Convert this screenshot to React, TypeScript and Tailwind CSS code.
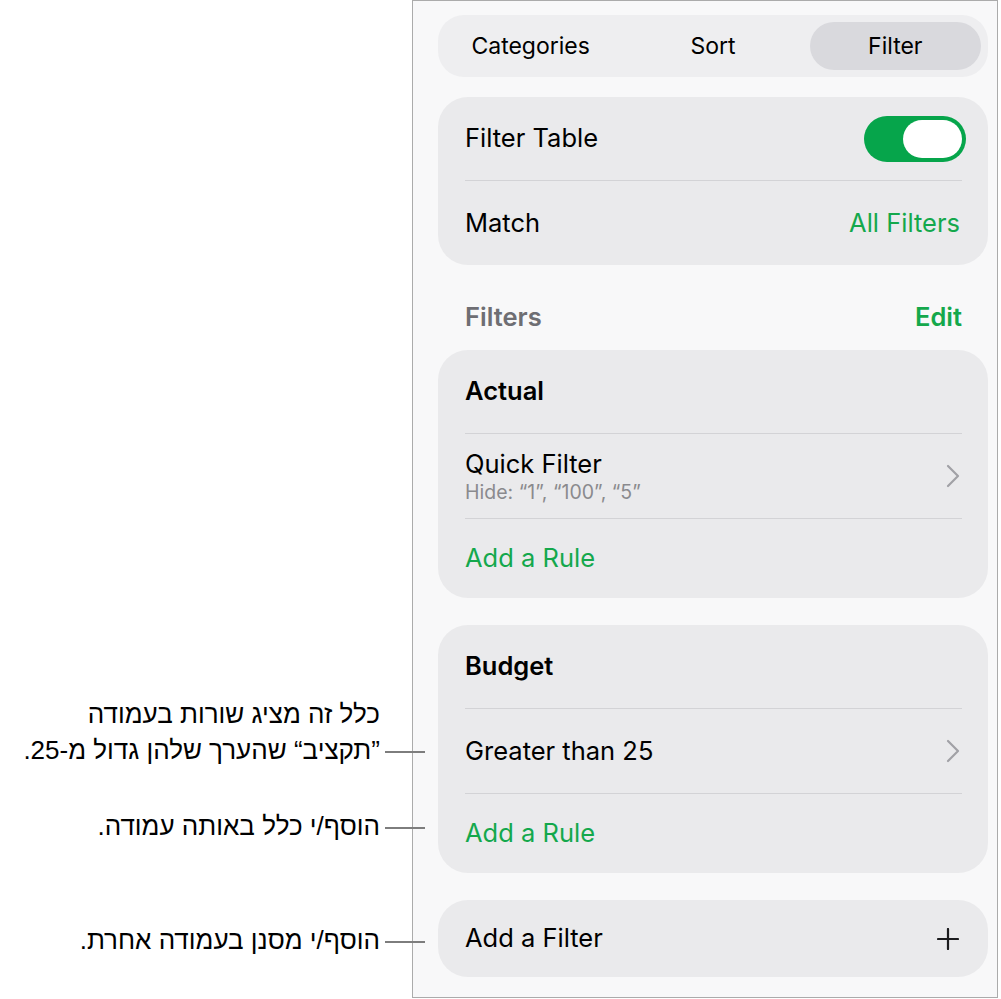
import React from "react";

const green = "text-[#14a84c]";

function Chevron() {
  return (
    <svg width="14" height="24" viewBox="0 0 14 24" fill="none" className="shrink-0">
      <path d="M2 2l10 10L2 22" stroke="#a1a1a6" strokeWidth="2.2" strokeLinecap="round" strokeLinejoin="round" />
    </svg>
  );
}

function Divider() {
  return <div className="h-px bg-[#d3d3d6] ml-[27px] mr-[26px]" />;
}

function Callout({ lines, mt }: { lines: string[]; mt: string }) {
  return (
    <div className={`flex items-end justify-end ${mt}`}>
      <div dir="rtl" className="text-right text-[26px] leading-[36px] text-black [font-family:'Liberation_Sans',Arial,sans-serif]">
        {lines.map((l) => (
          <div key={l}>{l}</div>
        ))}
      </div>
      <div className="h-[36px] pt-[3px] flex items-center ml-[5px] -mr-[13px] relative z-10">
        <div className="w-[40px] h-[2px] bg-[#7d7d7d]" />
      </div>
    </div>
  );
}

function FilterCard({ title, rule, hint }: { title: string; rule: string; hint?: string }) {
  return (
    <div className="bg-[#eaeaec] rounded-[30px]">
      <div className="h-[83px] flex items-center pl-[27px] text-[25.5px] font-semibold text-black">{title}</div>
      <Divider />
      <div className="h-[84px] flex items-center justify-between pl-[27px] pr-[28px]">
        <div className="flex flex-col">
          <span className="text-[25.5px] leading-[32px] text-black">{rule}</span>
          {hint && <span className="text-[19.5px] leading-[24px] text-[#8a8a8e]">{hint}</span>}
        </div>
        <Chevron />
      </div>
      <Divider />
      <div className={`h-[79px] flex items-center pl-[27px] text-[25.5px] ${green}`}>Add a Rule</div>
    </div>
  );
}

export default function App() {
  return (
    <div className="flex w-[1001px] h-[999px] bg-white [font-family:Inter,'Noto_Sans',sans-serif]">
      <div className="w-[412px] shrink-0 pt-[696px]">
        <Callout lines={["כלל זה מציג שורות בעמודה", "”תקציב“ שהערך שלהן גדול מ-25."]} mt="mt-0" />
        <Callout lines={["הוסף/י כלל באותה עמודה."]} mt="mt-[40px]" />
        <Callout lines={["הוסף/י מסנן בעמודה אחרת."]} mt="mt-[78px]" />
      </div>

      <div className="w-[586px] h-[998px] shrink-0 border border-[#ababab] bg-[#f8f8f9] pl-[25px] pr-[9px] pt-[14px] flex flex-col">
        {/* segmented control */}
        <div className="h-[62px] rounded-[26px] bg-[#eeeef0] p-[7px] grid grid-cols-3 gap-[11px] text-[23px] text-black">
          <div className="flex items-center justify-center">Categories</div>
          <div className="flex items-center justify-center">Sort</div>
          <div className="flex items-center justify-center rounded-full bg-[#d9d9dd]">Filter</div>
        </div>

        <div className="mt-[20px] bg-[#eaeaec] rounded-[30px]">
          <div className="h-[83px] flex items-center justify-between pl-[27px] pr-[22px]">
            <span className="text-[25.5px] text-black">Filter Table</span>
            <div className="w-[102px] h-[46px] rounded-full bg-[#06a54b] flex items-center justify-end pr-[4px]">
              <div className="w-[59px] h-[38px] rounded-full bg-white" />
            </div>
          </div>
          <Divider />
          <div className="h-[84px] flex items-center justify-between pl-[27px] pr-[28px] text-[25.5px]">
            <span className="text-black">Match</span>
            <span className={green}>All Filters</span>
          </div>
        </div>

        <div className="h-[85px] pt-[19px] flex items-center justify-between pl-[27px] pr-[26px] text-[25.5px] font-semibold">
          <span className="text-[#6e6e73]">Filters</span>
          <span className={green}>Edit</span>
        </div>

        <FilterCard title="Actual" rule="Quick Filter" hint="Hide: “1”, “100”, “5”" />
        <div className="mt-[27px]">
          <FilterCard title="Budget" rule="Greater than 25" />
        </div>

        <div className="mt-[27px] h-[77px] bg-[#eaeaec] rounded-[30px] flex items-center justify-between pl-[27px] pr-[29px]">
          <span className="text-[25.5px] text-black">Add a Filter</span>
          <svg width="22" height="22" viewBox="0 0 22 22" fill="none">
            <path d="M11 1v20M1 11h20" stroke="#1c1c1e" strokeWidth="2.2" strokeLinecap="round" />
          </svg>
        </div>
      </div>
    </div>
  );
}
